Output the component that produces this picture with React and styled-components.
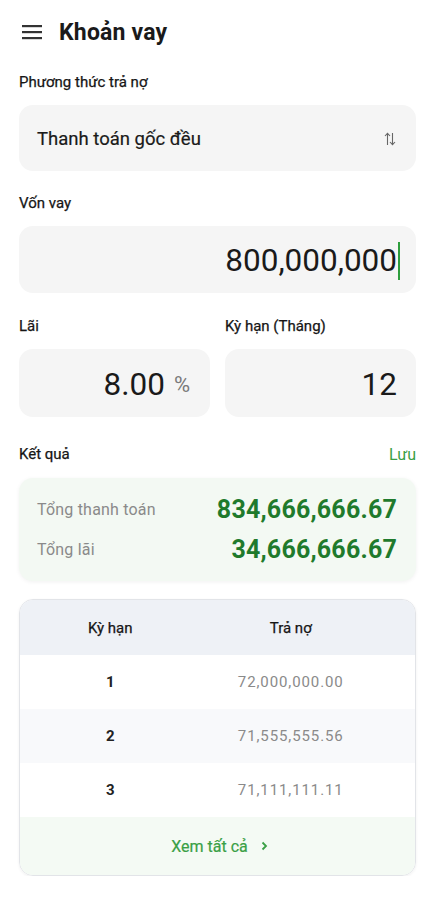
import React from "react";
import styled, { createGlobalStyle } from "styled-components";

const Global = createGlobalStyle`
  html, body { margin: 0; padding: 0; background: #fff; }
  body { font-family: Roboto, "Noto Sans", sans-serif; color: #1a1a1a; }
  * { box-sizing: border-box; }
`;

const Page = styled.div`
  width: 434px;
  padding: 0 18px 0 19px;
  display: flex;
  flex-direction: column;
`;

const Header = styled.div`
  height: 64px;
  display: flex;
  align-items: center;
  gap: 17px;
  padding-left: 3px;
`;

const Title = styled.h1`
  margin: 0;
  font-size: 23px;
  font-weight: 700;
  color: #1a1a1a;
  letter-spacing: 0.2px;
`;

const Label = styled.div`
  font-size: 15px;
  line-height: 18px;
  font-weight: 400;
  color: #161616;
  -webkit-text-stroke: 0.25px #161616;
  margin: ${(p) => p.$mt || 0}px 0 14px;
`;

const SelectBox = styled.div`
  height: 66px;
  background: #f5f5f5;
  border-radius: 14px;
  display: flex;
  align-items: center;
  justify-content: space-between;
  padding: 2px 20px 0 18px;
  font-size: 18.5px;
  font-weight: 400;
  color: #1a1a1a;
  -webkit-text-stroke: 0.2px #1a1a1a;
`;

const InputBox = styled.div`
  height: ${(p) => p.$h || 67}px;
  background: #f5f5f5;
  border-radius: 14px;
  display: flex;
  align-items: center;
  justify-content: flex-end;
  padding: 2px ${(p) => p.$pr || 20}px 0 18px;
  font-size: 31.5px;
  color: #1a1a1a;
`;

const Cursor = styled.span`
  display: inline-block;
  width: 2px;
  height: 38px;
  background: #2e9e3e;
  margin-left: 1px;
`;

const Unit = styled.span`
  font-size: 22px;
  color: #7a7a7a;
  margin-left: 9px;
`;

const Row2 = styled.div`
  display: grid;
  grid-template-columns: 1fr 1fr;
  column-gap: 15px;
  margin-top: 24px;
`;

const Col = styled.div`
  display: flex;
  flex-direction: column;
`;

const SectionHead = styled.div`
  display: flex;
  justify-content: space-between;
  align-items: center;
  height: 18px;
  margin: 28px 0 15px;
`;

const SectionTitle = styled.div`
  font-size: 15px;
  color: #161616;
  -webkit-text-stroke: 0.25px #161616;
`;

const SaveLink = styled.div`
  font-size: 16px;
  color: #3aa046;
`;

const ResultCard = styled.div`
  background: #f3f9f3;
  border-radius: 14px;
  box-shadow: 0 1px 4px rgba(0, 0, 0, 0.06);
  padding: 16px 19px 17px 18px;
  display: flex;
  flex-direction: column;
  gap: 10px;
`;

const ResultRow = styled.div`
  display: flex;
  justify-content: space-between;
  align-items: center;
  height: 30px;
`;

const ResultLabel = styled.span`
  font-size: 16px;
  color: #8a8a8a;
  letter-spacing: 0.2px;
`;

const ResultValue = styled.span`
  font-size: 25px;
  font-weight: 700;
  color: #1f7a2c;
  letter-spacing: 0.2px;
`;

const Table = styled.div`
  margin-top: 18px;
  border: 1px solid #e2e4e8;
  border-radius: 14px;
  overflow: hidden;
  box-shadow: 0 1px 3px rgba(0, 0, 0, 0.06);
`;

const TRow = styled.div`
  display: grid;
  grid-template-columns: 1fr 1fr;
  padding-right: 34px;
  align-items: center;
  height: ${(p) => p.$h || 54}px;
  background: ${(p) => p.$bg || "#fff"};
`;

const Cell = styled.div`
  text-align: center;
  font-size: 15px;
  font-weight: ${(p) => (p.$bold ? 700 : 400)};
  color: ${(p) => p.$color || "#222"};
  letter-spacing: ${(p) => (p.$num ? "0.9px" : "0")};
`;

const HeadCell = styled(Cell)`
  color: #161616;
  -webkit-text-stroke: 0.25px #161616;
`;

const Footer = styled.div`
  height: 58px;
  background: #f4faf4;
  display: flex;
  align-items: center;
  justify-content: center;
  gap: 13px;
  padding-left: 4px;
  font-size: 16px;
  color: #3aa046;
  -webkit-text-stroke: 0.2px #3aa046;
`;

const MenuIcon = () => (
  <svg width="20" height="16" viewBox="0 0 20 16">
    <rect x="0" y="1" width="20" height="2.2" fill="#333" />
    <rect x="0" y="7" width="20" height="2.2" fill="#333" />
    <rect x="0" y="13" width="20" height="2.2" fill="#333" />
  </svg>
);

const SortIcon = () => (
  <svg width="12" height="14" viewBox="0 0 12 14">
    <path d="M3.5 13V1.5M1 4l2.5-2.7L6 4" stroke="#666" strokeWidth="1.1" fill="none" />
    <path d="M8.5 1v11.5M6 10l2.5 2.7L11 10" stroke="#666" strokeWidth="1.1" fill="none" />
  </svg>
);

const Chevron = () => (
  <svg width="7" height="10" viewBox="0 0 7 10">
    <path d="M1.5 1.5L5 5l-3.5 3.5" stroke="#3aa046" strokeWidth="1.8" fill="none" />
  </svg>
);

const rows = [
  ["1", "72,000,000.00", "#fff"],
  ["2", "71,555,555.56", "#f8f9fb"],
  ["3", "71,111,111.11", "#fff"],
];

export default function App() {
  return (
    <>
      <Global />
      <Page>
        <Header>
          <MenuIcon />
          <Title>Khoản vay</Title>
        </Header>
        <Label $mt={9}>Phương thức trả nợ</Label>
        <SelectBox>
          <span>Thanh toán gốc đều</span>
          <SortIcon />
        </SelectBox>
        <Label $mt={23}>Vốn vay</Label>
        <InputBox $pr={16}>
          <span>800,000,000</span>
          <Cursor />
        </InputBox>
        <Row2>
          <Col>
            <Label>Lãi</Label>
            <InputBox $h={68}>
              <span>8.00</span>
              <Unit>%</Unit>
            </InputBox>
          </Col>
          <Col>
            <Label>Kỳ hạn (Tháng)</Label>
            <InputBox $h={68} $pr={19}>
              <span>12</span>
            </InputBox>
          </Col>
        </Row2>
        <SectionHead>
          <SectionTitle>Kết quả</SectionTitle>
          <SaveLink>Lưu</SaveLink>
        </SectionHead>
        <ResultCard>
          <ResultRow>
            <ResultLabel>Tổng thanh toán</ResultLabel>
            <ResultValue>834,666,666.67</ResultValue>
          </ResultRow>
          <ResultRow>
            <ResultLabel>Tổng lãi</ResultLabel>
            <ResultValue>34,666,666.67</ResultValue>
          </ResultRow>
        </ResultCard>
        <Table>
          <TRow $bg="#eef1f6" $h={55}>
            <HeadCell>Kỳ hạn</HeadCell>
            <HeadCell>Trả nợ</HeadCell>
          </TRow>
          {rows.map(([k, v, bg]) => (
            <TRow key={k} $bg={bg}>
              <Cell $bold>{k}</Cell>
              <Cell $color="#8a8a8a" $num>{v}</Cell>
            </TRow>
          ))}
          <Footer>
            <span>Xem tất cả</span>
            <Chevron />
          </Footer>
        </Table>
      </Page>
    </>
  );
}
